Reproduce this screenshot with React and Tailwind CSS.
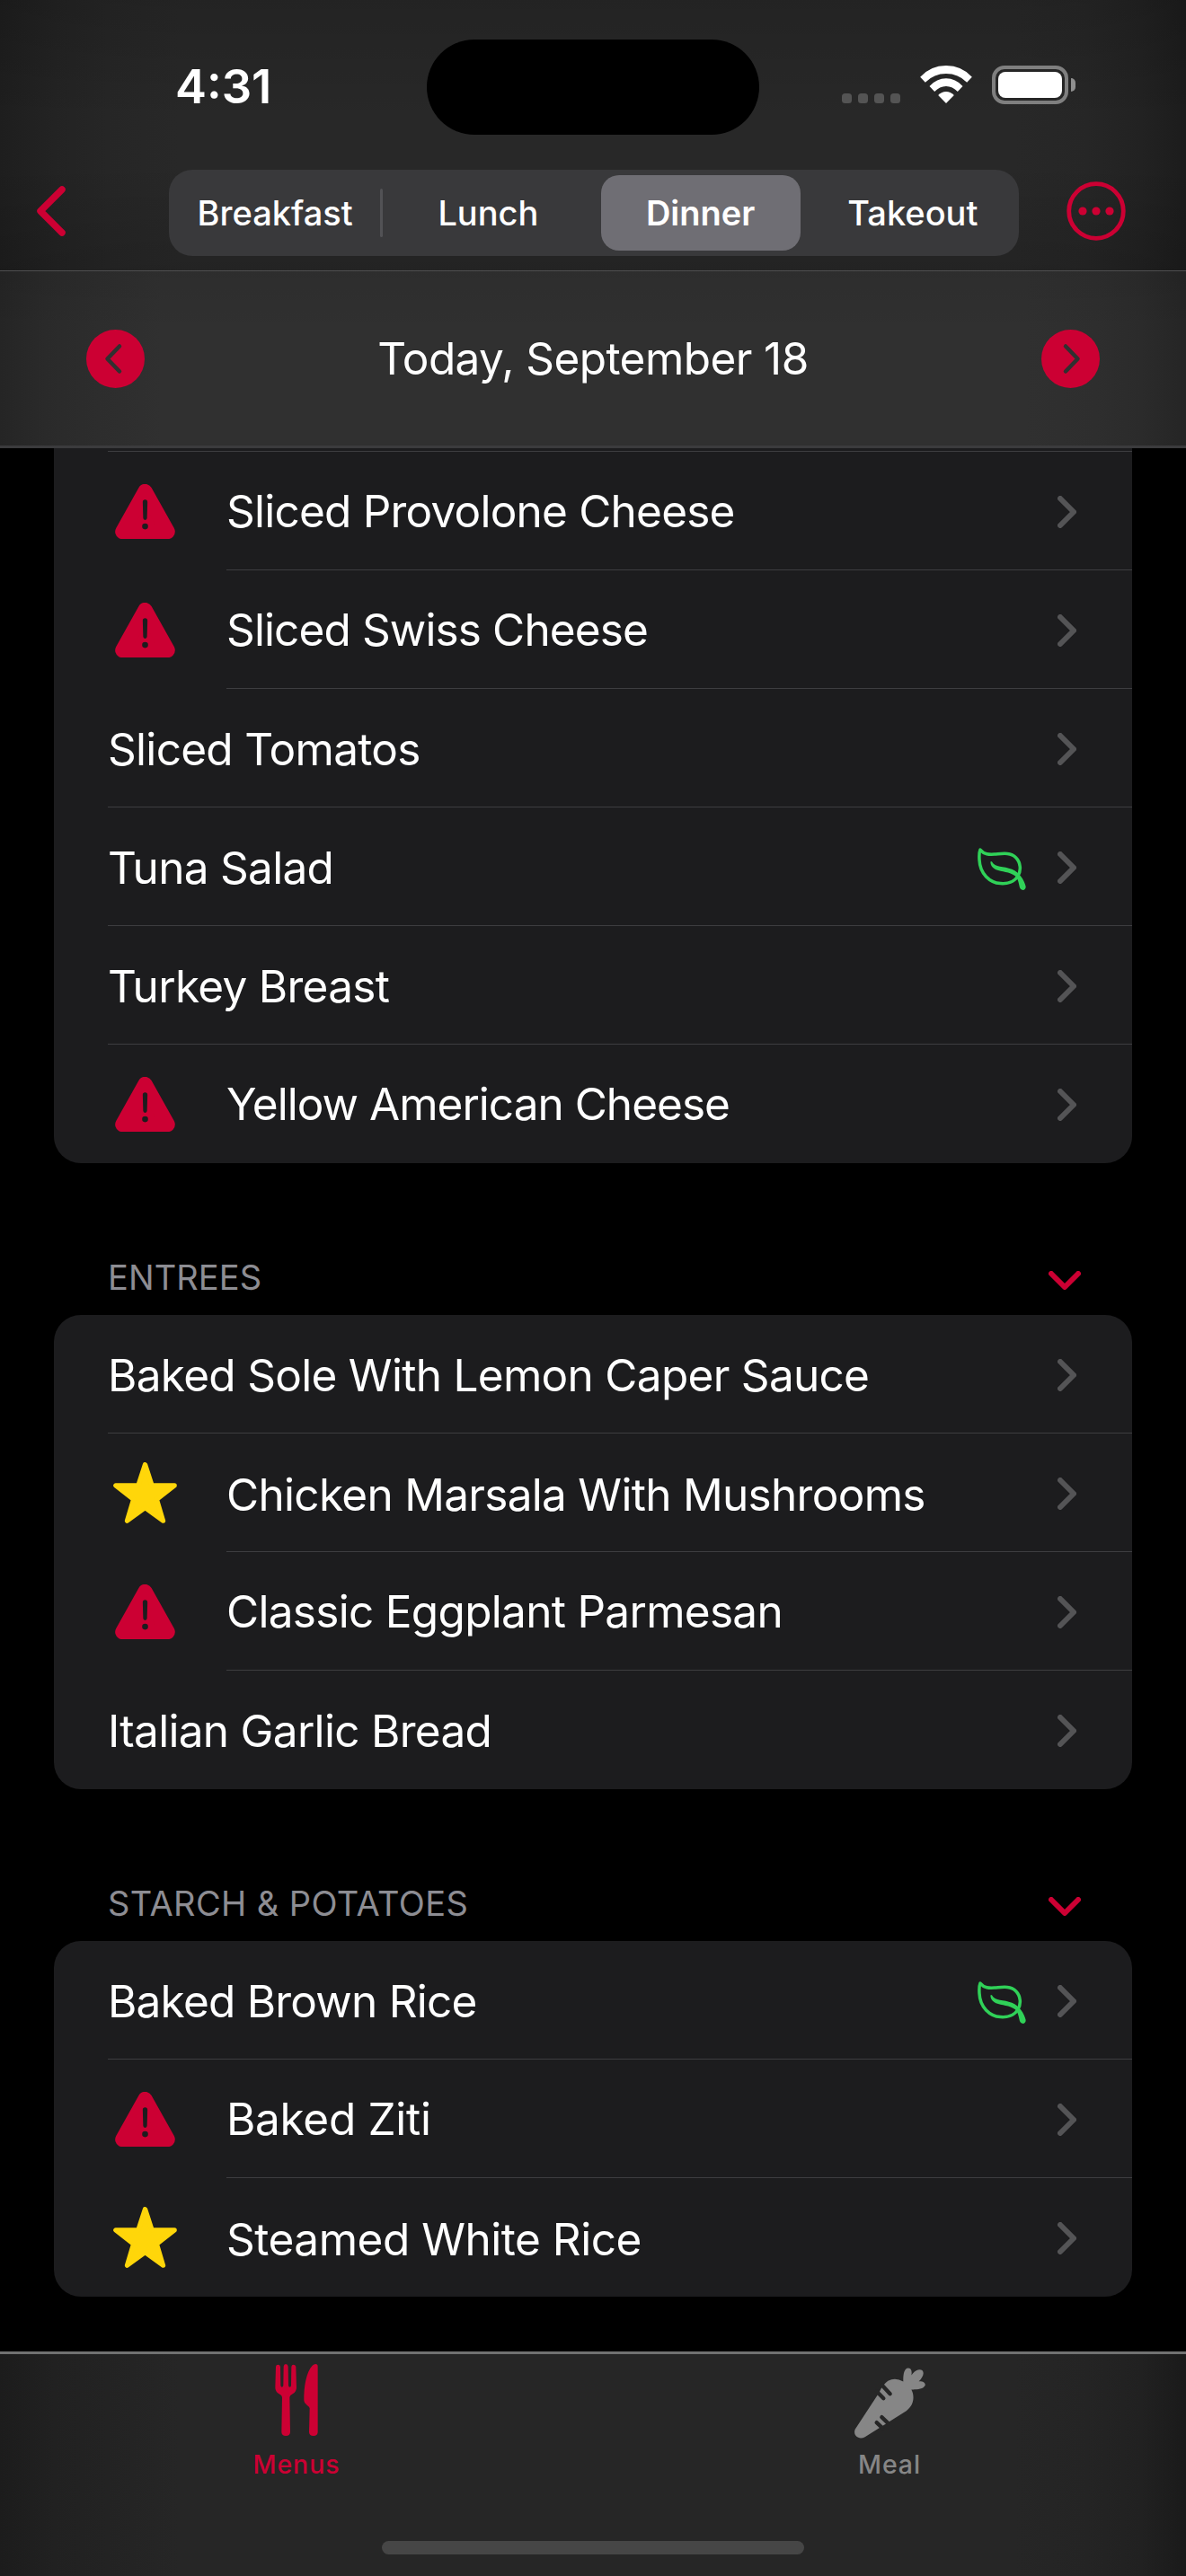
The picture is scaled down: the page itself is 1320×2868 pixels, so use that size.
import React from "react";

const RED = "#cc0033";

function Warning() {
  return (
    <svg className="ml-2 h-[61px] w-[67px]" viewBox="54 461 202 184">
      <path d="M155 485 L79 621 H231 Z" fill={RED} stroke={RED} strokeWidth="49" strokeLinejoin="round" />
      <path d="M147 521 a8 8 0 0 1 16 0 L161.500 575 a6.500 6.500 0 0 1 -13 0 Z" fill="#1c1c1e" />
      <circle cx="155" cy="603" r="10" fill="#1c1c1e" />
    </svg>
  );
}

function Star() {
  return (
    <svg className="ml-[6px] h-[68px] w-[71px]" viewBox="48.500 54 213 204">
      <path
        d="M155 62 L178 132 H253 L193.500 178 L215 249.500 L155 206 L95 249.500 L116.500 178 L57 132 H132 Z"
        fill="#ffd60a"
        stroke="#ffd60a"
        strokeWidth="16"
        strokeLinejoin="round"
      />
    </svg>
  );
}

function Leaf() {
  return (
    <svg className="mr-[35px] mt-[5px] h-[47px] w-[54px]" viewBox="54 52 161 140" fill="none" stroke="#30d158">
      <path
        d="M63 58 C76 74 92 74 110 73 C130 72 162 64 181 84 C197 100 200 127 187 147 C176 164 153 172 130 170 C94 167 62 138 60 92 C59 78 60 65 63 58 Z"
        strokeWidth="10.500"
        strokeLinejoin="round"
      />
      <path
        d="M97 99 Q98 95 102 98 C111 118 141 111 168 123 C194 134 208 158 214 180 Q214 191 204 192 Q197 192 194 184 C190 165 188 154 179 145 C160 130 134 132 115 124 C101 118 97 107 97 99 Z"
        fill="#30d158"
        stroke="none"
      />
    </svg>
  );
}

function RowChevron() {
  return (
    <svg className="mt-[2px] h-9 w-[21px]" viewBox="0 0 21 36" fill="none">
      <path d="M3 3 L18 18 L3 33" stroke="#545456" strokeWidth="6" strokeLinecap="round" strokeLinejoin="round" />
    </svg>
  );
}

function Row({ label, icon, leaf, last, tracking = "tracking-[-0.7px]" }) {
  return (
    <div className="flex h-[132px] shrink-0 items-stretch pl-[60px]">
      {icon && (
        <div className="flex w-[132px] items-center">{icon === "star" ? <Star /> : <Warning />}</div>
      )}
      <div className={"flex flex-1 items-center pr-[62px] " + (last ? "pb-px" : "border-b border-[#3d3d40]")}>
        <span
          className={
            "flex-1 whitespace-nowrap text-[49.5px] leading-[60px] text-white " +
            tracking +
            " " +
            (icon === "star" ? "pt-[4px]" : icon ? "" : "pt-[2px]")
          }
        >
          {label}
        </span>
        {leaf && <Leaf />}
        <RowChevron />
      </div>
    </div>
  );
}

function Card({ rows, rounding }) {
  return (
    <div className={"mx-[60px] flex flex-col bg-[#1c1c1e] " + rounding}>
      {rows.map((r, i) => (
        <Row key={r.label} {...r} last={i === rows.length - 1} />
      ))}
    </div>
  );
}

function SectionHeader({ title, tracking }) {
  return (
    <div className="mx-[60px] flex h-[169px] items-end justify-between pl-[60px] pr-[57px]">
      <span className={"pb-[19px] text-[38px] leading-[46px] text-[#8d8d93] " + tracking}>{title}</span>
      <svg className="mb-[28px] h-[21px] w-9" viewBox="0 0 36 21" fill="none">
        <path d="M3 3 L18 18 L33 3" stroke={RED} strokeWidth="6" strokeLinecap="round" strokeLinejoin="round" />
      </svg>
    </div>
  );
}

const deli = [
  { label: "Sliced Provolone Cheese", icon: "warn", tracking: "tracking-[-0.78px]" },
  { label: "Sliced Swiss Cheese", icon: "warn", tracking: "tracking-[-0.88px]" },
  { label: "Sliced Tomatos" },
  { label: "Tuna Salad", leaf: true },
  { label: "Turkey Breast" },
  { label: "Yellow American Cheese", icon: "warn", tracking: "tracking-[-0.98px]" },
];
const entrees = [
  { label: "Baked Sole With Lemon Caper Sauce" },
  { label: "Chicken Marsala With Mushrooms", icon: "star" },
  { label: "Classic Eggplant Parmesan", icon: "warn" },
  { label: "Italian Garlic Bread" },
];
const starch = [
  { label: "Baked Brown Rice", leaf: true, tracking: "tracking-[-0.78px]" },
  { label: "Baked Ziti", icon: "warn", tracking: "tracking-[-0.3px]" },
  { label: "Steamed White Rice", icon: "star", tracking: "tracking-[-0.48px]" },
];

function StatusBar() {
  return (
    <div className="flex h-[150px] items-start">
      <div className="w-[475px] pl-[195px] pt-[64px] text-[52.5px] font-semibold leading-[64px] text-white">4:31</div>
      <div className="mt-11 h-[106px] w-[370px] rounded-full bg-black" />
      <div className="ml-[92px] mt-[104px] flex gap-[7px]">
        {[0, 1, 2, 3].map((i) => (
          <div key={i} className="size-[11px] rounded-[3.5px] bg-[#545454]" />
        ))}
      </div>
      <svg className="ml-[22px] mt-[73px] h-[42px] w-[58px]" viewBox="314 39 173 126" fill="#fff">
        <path d="M314 77 Q349 39 400.500 39 Q452 39 487 77 L470 95 Q441 66 400.500 66 Q360 66 331 95 Z" />
        <path d="M345 108 Q369 82 400.500 82 Q432 82 456 108 L439 126 Q422 108 400.500 108 Q379 108 362 126 Z" />
        <path d="M374 138 Q386 126 400.500 126 Q415 126 427 138 L400.500 165 Z" />
      </svg>
      <div className="ml-[22px] mt-[73px] flex items-center gap-[3px]">
        <div className="h-[43px] w-[85px] rounded-[14px] border-[4px] border-[#7f7f7f] p-[3px]">
          <div className="h-full w-full rounded-[8px] bg-white" />
        </div>
        <div className="h-[15px] w-[5px] rounded-r-full bg-[#8f8f8f]" />
      </div>
    </div>
  );
}

const segText = "flex flex-1 items-center justify-center text-[38px] leading-[46px] text-white";

export default function App() {
  return (
    <div className="flex h-[2868px] w-[1320px] flex-col overflow-hidden bg-black font-['Inter',sans-serif]">
      <div className="h-[302px] shrink-0 border-b border-[#4f4f50] bg-[linear-gradient(180deg,rgba(0,0,0,0.12)_0,rgba(0,0,0,0)_45%,rgba(0,0,0,0)_60%,rgba(0,0,0,0.12)_100%),linear-gradient(90deg,#1e1e1e_0,#232323_60px,#262626_120px,#282828_200px,#282828_1130px,#262626_1210px,#222222_1270px,#1c1c1c_1320px)]">
        <StatusBar />
        <div className="flex h-[151px] items-start">
          <svg className="ml-10 mt-[57px] h-14 w-[33px]" viewBox="0 0 33 56" fill="none">
            <path d="M29 4 L5 28 L29 52" stroke={RED} strokeWidth="7.5" strokeLinecap="round" strokeLinejoin="round" />
          </svg>
          <div className="ml-[115px] mt-[39px] flex h-24 w-[946px] rounded-[26px] bg-[#39393b]">
            <div className={segText + " font-[450]"}>Breakfast</div>
            <div className="-mx-px mt-[21px] h-[54px] w-[3px] rounded-full bg-[#525255]" />
            <div className={segText + " font-[450]"}>Lunch</div>
            <div className={segText + " font-semibold"}>
              <div className="flex h-[84px] w-[222px] items-center justify-center rounded-[20px] bg-[#6f6e74]">
                Dinner
              </div>
            </div>
            <div className={segText + " font-[450]"}>Takeout</div>
          </div>
          <svg className="ml-[53px] mt-[52px] size-[66px]" viewBox="0 0 66 66">
            <circle cx="33" cy="33" r="30.300" fill="none" stroke={RED} strokeWidth="4.800" />
            <circle cx="18" cy="33" r="4.600" fill={RED} />
            <circle cx="33" cy="33" r="4.600" fill={RED} />
            <circle cx="48" cy="33" r="4.600" fill={RED} />
          </svg>
        </div>
      </div>

      <div className="flex h-[197px] shrink-0 items-center justify-between border-b-[3px] border-[#3b3b3d] bg-[linear-gradient(180deg,rgba(0,0,0,0.06)_0,rgba(0,0,0,0)_35%),linear-gradient(90deg,#252525_0,#2a2a2a_50px,#2d2d2d_110px,#303030_180px,#303030_1140px,#2e2e2e_1220px,#2b2b2b_1270px,#252525_1320px)] pl-24 pr-[96px]">
        <svg className="size-[65px]" viewBox="0 0 65 65" fill="none">
          <circle cx="32.500" cy="32.500" r="32.500" fill={RED} />
          <path d="M37 18.500 L23.500 32.500 L37 46.500" stroke="#303030" strokeWidth="4.500" strokeLinecap="round" strokeLinejoin="round" />
        </svg>
        <span className="text-[49.5px] leading-[60px] tracking-[-0.57px] text-white">Today, September 18</span>
        <svg className="size-[65px]" viewBox="0 0 65 65" fill="none">
          <circle cx="32.500" cy="32.500" r="32.500" fill={RED} />
          <path d="M27 18.500 L40.500 32.500 L27 46.500" stroke="#303030" strokeWidth="4.500" strokeLinecap="round" strokeLinejoin="round" />
        </svg>
      </div>

      <div className="flex h-[2119px] shrink-0 flex-col overflow-hidden">
        <div className="mx-[60px] flex h-1 shrink-0 bg-[#1c1c1e] pl-[60px]">
          <div className="flex-1 border-b border-[#3d3d40]" />
        </div>
        <Card rows={deli} rounding="rounded-b-[30px]" />
        <SectionHeader title="ENTREES" tracking="tracking-[0.1px]" />
        <Card rows={entrees} rounding="rounded-[30px]" />
        <SectionHeader title="STARCH & POTATOES" tracking="tracking-[0.4px]" />
        <Card rows={starch} rounding="rounded-[30px]" />
      </div>

      <div className="flex h-[250px] shrink-0 flex-col items-center border-t-[3px] border-[#717272] bg-[linear-gradient(90deg,#1c1c1c_0,#212121_60px,#232323_120px,#262626_200px,#262626_1130px,#242424_1210px,#212121_1270px,#1a1a1a_1320px)]">
        <div className="flex h-[208px] w-full">
          <div className="flex flex-1 flex-col items-center">
            <svg className="mt-[11px] h-20 w-12" viewBox="255 276 144 240" fill={RED}>
              <path d="M258 285 Q259 278 265 278 Q272 278 273 285 L274 348 Q275 353 279 353 Q282 352 283 348 L284 284 Q285 276 291 276 Q298 276 299 284 L300 348 Q301 353 305 353 Q309 352 309 348 L310 285 Q311 278 317 278 Q323 278 325 285 L327 355 Q327 369 314 376 Q304 381 304 387 L306 504 Q305 516 291.500 516 Q278 516 277 504 L279 387 Q279 381 269 376 Q256 369 256 355 Z" />
              <path d="M391 276 Q398 276 398 284 V504 Q397 516 383.500 516 Q370 516 369 504 L371 424 Q371 419 362 413 Q352 406 352 398 C351 350 360 302 380 281 Q385 276 391 276 Z" />
            </svg>
            <span className="mt-[15px] text-[28.5px] font-medium leading-[34px] tracking-[0.9px] text-[#cc0033]">Menus</span>
          </div>
          <div className="flex flex-1 flex-col items-center">
            <svg className="mt-[15px] h-[79px] w-[79px]" viewBox="149 290 237 236">
              <g fill="#868686">
                <path d="M232 372 Q243 347 261 334 Q285 321 312 336 C311 310 316 290 329 291 C341 292 341 306 339 315 C352 297 366 293 376 299 C384 309 375 324 364 335 C378 334 387 340 385 349 C379 362 357 363 339 363 C350 383 349 414 322 434 L184 521 C164 532 143 517 151 496 Z" />
              </g>
              <g stroke="#262626" strokeWidth="13" strokeLinecap="round">
                <path d="M241 348 L268 377" />
                <path d="M224 370 L246 392" />
                <path d="M240 455 L262 476" />
                <path d="M223 473 L242 491" />
              </g>
            </svg>
            <span className="mt-[12px] text-[28.5px] font-medium leading-[34px] tracking-[0.9px] text-[#868686]">Meal</span>
          </div>
        </div>
        <div className="h-[15px] w-[470px] rounded-full bg-[#464646]" />
      </div>
    </div>
  );
}
